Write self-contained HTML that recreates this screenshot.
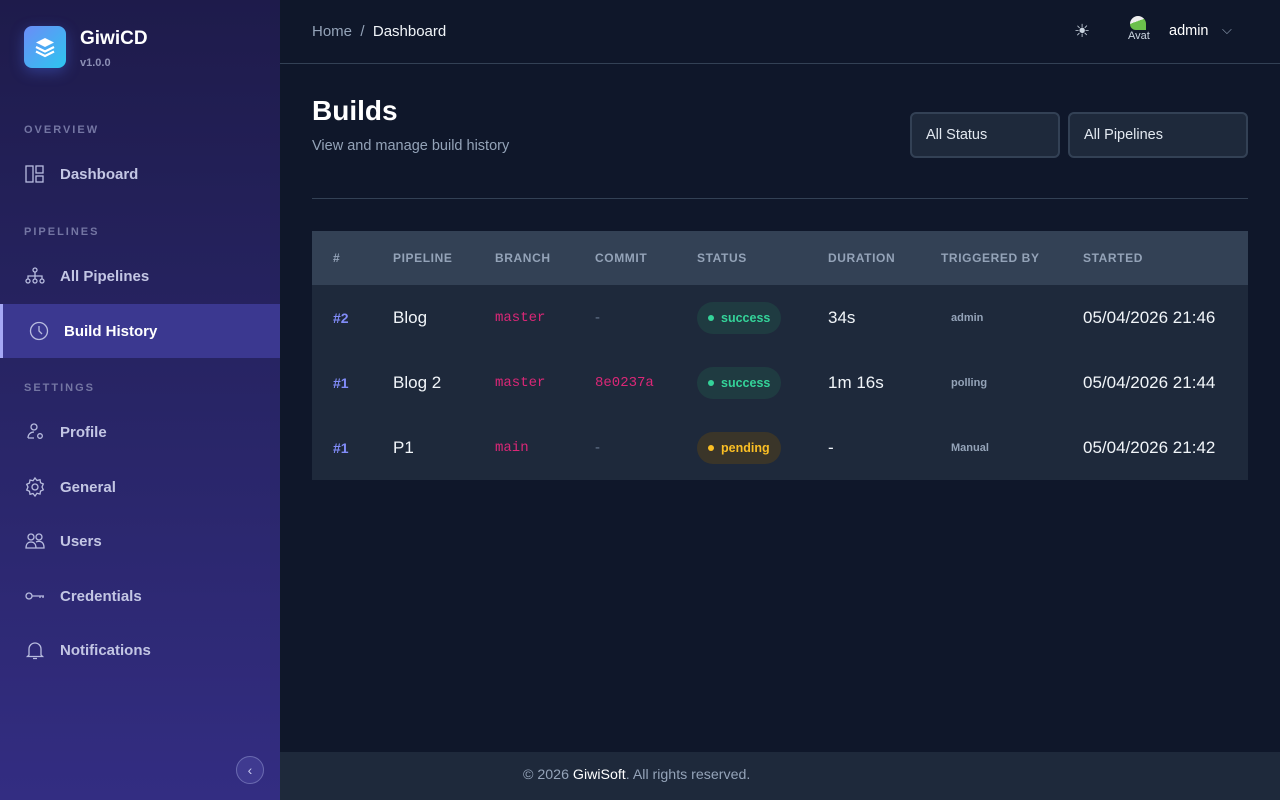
<!DOCTYPE html>
<html><head><meta charset="utf-8"><style>
*{box-sizing:border-box;margin:0;padding:0}
body{width:1280px;height:800px;overflow:hidden;background:#0f172a;font-family:"Liberation Sans",sans-serif;position:relative;color:#f1f5f9}
.sb{position:absolute;left:0;top:0;width:280px;height:800px;background:linear-gradient(180deg,#1e1b4b 0%,#272463 45%,#332d82 100%)}
.logo{position:absolute;left:24px;top:26px;width:42px;height:42px;border-radius:8px;background:linear-gradient(135deg,#6b8cf7,#2cc6ef);box-shadow:0 4px 14px rgba(80,120,255,.35)}
.brand{position:absolute;left:80px;top:28px;font-size:19px;font-weight:bold;color:#fff}
.ver{position:absolute;left:80px;top:57px;font-size:11px;font-weight:bold;color:#8c8fb5}
.sec{position:absolute;left:24px;font-size:11px;font-weight:bold;letter-spacing:2px;color:#7476a3}
.it{position:absolute;left:0;width:280px;height:54px;display:flex;align-items:center;padding-left:24px;font-size:15px;font-weight:bold;color:#c3c6e4}
.it svg{width:22px;height:22px;margin-right:14px;stroke:#b8bcdf;fill:none;stroke-width:1.3}
.act{background:#3b3890;border-left:3px solid #a5a8f5;color:#fff;padding-left:25px}
.coll{position:absolute;left:236px;top:756px;width:28px;height:28px;border-radius:50%;border:1px solid #6a6ab0;background:#3f3a90;color:#c7c9ee;font-size:14px;text-align:center;line-height:26px}
.top{position:absolute;left:280px;top:0;right:0;height:64px;border-bottom:1px solid #334155}
.bc{position:absolute;left:32px;top:23px;font-size:15px;color:#94a3b8}
.bc b{color:#f1f5f9;font-weight:normal}
h1{position:absolute;left:312px;top:95px;font-size:28px;color:#fff}
.sub{position:absolute;left:312px;top:138px;font-size:14.5px;color:#94a3b8}
.sel{position:absolute;top:112px;height:46px;border:2px solid #334155;border-radius:6px;background:#1e293b;font-size:14.5px;color:#e2e8f0;padding:13px 14px}
.hr{position:absolute;left:312px;top:198px;width:936px;height:1px;background:#334155}
table{position:absolute;left:312px;top:231px;width:936px;border-collapse:collapse}
th{background:#334155;height:54px;text-align:left;font-size:12px;letter-spacing:.6px;color:#94a3b8;padding-left:21px}
td{background:#1e293b;height:65px;padding-left:21px;font-size:17px;color:#f1f5f9}
.n{color:#818cf8;font-weight:bold;font-size:14px}
.m{font-family:"Liberation Mono",monospace;color:#db2777;font-size:14px}
.d{color:#64748b;font-size:15px}
.b{display:inline-block;padding:9px 11px;border-radius:16px;font-size:12.5px;font-weight:bold}
.b i{display:inline-block;width:6px;height:6px;border-radius:50%;margin-right:7px;vertical-align:1px}
.s{background:#1f3b41;color:#34d399}.s i{background:#34d399}
.p{background:#3a3529;color:#fbbf24}.p i{background:#fbbf24}
.tb{font-size:11px;color:#94a3b8;font-weight:bold;padding-left:31px}
.foot{position:absolute;left:280px;top:752px;right:0;height:48px;background:#1e293b;font-size:14.2px;color:#94a3b8;padding:15px 0 0 243px}
.foot b{color:#fff;font-weight:normal}
</style></head><body>
<div class="sb">
<div class="logo"><svg width="42" height="42" viewBox="0 0 42 42"><path d="M21 12l9 4.5-9 4.5-9-4.5z" fill="#fff"/><path d="M12 21l9 4.5 9-4.5M12 25.5l9 4.5 9-4.5" fill="none" stroke="#fff" stroke-width="2.2"/></svg></div>
<div class="brand">GiwiCD</div><div class="ver">v1.0.0</div>
<div class="sec" style="top:124px">OVERVIEW</div>
<div class="it" style="top:147px"><svg viewBox="0 0 22 22"><rect x="2" y="3" width="7" height="16"/><rect x="12" y="3" width="7" height="7"/><rect x="12" y="13" width="7" height="6"/></svg>Dashboard</div>
<div class="sec" style="top:226px">PIPELINES</div>
<div class="it" style="top:249px"><svg viewBox="0 0 22 22"><circle cx="11" cy="5" r="2"/><circle cx="4" cy="16" r="2"/><circle cx="11" cy="16" r="2"/><circle cx="18" cy="16" r="2"/><path d="M11 7v7M4 14v-3h14v3"/></svg>All Pipelines</div>
<div class="it act" style="top:304px"><svg viewBox="0 0 22 22"><circle cx="11" cy="11" r="8.5"/><path d="M11 6v5l3 3"/></svg>Build History</div>
<div class="sec" style="top:382px">SETTINGS</div>
<div class="it" style="top:405px"><svg viewBox="0 0 22 22"><circle cx="10" cy="6" r="3"/><path d="M4 17c0-4 3-6 6-6M4 17h6"/><circle cx="16" cy="15" r="2.3"/></svg>Profile</div>
<div class="it" style="top:460px"><svg viewBox="0 0 22 22"><circle cx="11" cy="11" r="3"/><path d="M11 2l2 2.5 3-.8.5 3 2.8 1.3-1.3 3 1.3 2.8-2.8 1.3-.5 3-3-.8L11 20l-2-2.5-3 .8-.5-3L2.7 14 4 11 2.7 8.3 5.5 7 6 4l3 .8z"/></svg>General</div>
<div class="it" style="top:514px"><svg viewBox="0 0 22 22"><circle cx="7" cy="7" r="3"/><circle cx="15" cy="7" r="3"/><path d="M2 18c0-4 2-6 5-6s5 2 5 6zM12 12c1-.5 2-.6 3-.6 3 0 5 2 5 6.6h-8"/></svg>Users</div>
<div class="it" style="top:569px"><svg viewBox="0 0 22 22"><circle cx="5" cy="11" r="3"/><path d="M8 11h12M16 11v2M19 11v2"/></svg>Credentials</div>
<div class="it" style="top:623px"><svg viewBox="0 0 22 22"><path d="M5 16V10a6 6 0 0112 0v6l1.5 1.5h-15zM9 19.5h4"/></svg>Notifications</div>
<div class="coll">‹</div>
</div>
<div class="top">
<div class="bc">Home &nbsp;/&nbsp; <b>Dashboard</b></div>
<div style="position:absolute;left:794px;top:21px;color:#cbd5e1;font-size:18px">☀</div>
<div style="position:absolute;left:848px;top:16px;width:24px;height:34px;font-size:11px;color:#cbd5e1;overflow:hidden"><div style="width:16px;height:14px;border-radius:8px 8px 0 6px;background:linear-gradient(160deg,#eee 40%,#6bc04b 40%);margin-left:2px"></div>Avat</div>
<div style="position:absolute;left:889px;top:23px;font-size:14.5px;color:#fff">admin</div>
<div style="position:absolute;left:942px;top:22px;color:#94a3b8;font-size:13px">⌵</div>
</div>
<h1>Builds</h1>
<div class="sub">View and manage build history</div>
<div class="sel" style="left:910px;width:150px">All Status</div>
<div class="sel" style="left:1068px;width:180px">All Pipelines</div>
<div class="hr"></div>
<table>
<tr><th style="width:60px">#</th><th style="width:102px">PIPELINE</th><th style="width:100px">BRANCH</th><th style="width:102px">COMMIT</th><th style="width:131px">STATUS</th><th style="width:113px">DURATION</th><th style="width:142px">TRIGGERED BY</th><th>STARTED</th></tr>
<tr><td class="n">#2</td><td>Blog</td><td class="m">master</td><td class="d">-</td><td><span class="b s"><i></i>success</span></td><td>34s</td><td class="tb">admin</td><td>05/04/2026 21:46</td></tr>
<tr><td class="n">#1</td><td>Blog 2</td><td class="m">master</td><td class="m">8e0237a</td><td><span class="b s"><i></i>success</span></td><td>1m 16s</td><td class="tb">polling</td><td>05/04/2026 21:44</td></tr>
<tr><td class="n">#1</td><td>P1</td><td class="m">main</td><td class="d">-</td><td><span class="b p"><i></i>pending</span></td><td>-</td><td class="tb">Manual</td><td>05/04/2026 21:42</td></tr>
</table>
<div class="foot">© 2026 <b>GiwiSoft</b>. All rights reserved.</div>
</body></html>
